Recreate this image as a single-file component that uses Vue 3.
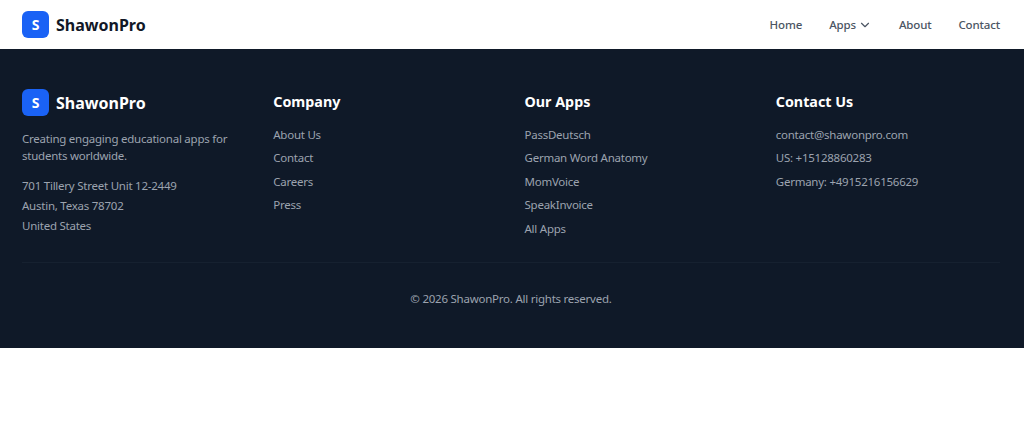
<script setup>
const company = ["About Us", "Contact", "Careers", "Press"];
const apps = ["PassDeutsch", "German Word Anatomy", "MomVoice", "SpeakInvoice", "All Apps"];
const contact = ["contact@shawonpro.com", "US: +15128860283", "Germany: +4915216156629"];
</script>

<template>
  <div class="page">
    <header class="nav">
      <a class="brand">
        <span class="mark">S</span>
        <span class="brand-name">ShawonPro</span>
      </a>
      <nav class="nav-links">
        <a>Home</a>
        <a class="has-caret">
          Apps
          <svg width="14" height="14" viewBox="0 0 24 24" fill="none" stroke="currentColor" stroke-width="2" stroke-linecap="round" stroke-linejoin="round">
            <path d="M6 9l6 6 6-6" />
          </svg>
        </a>
        <a>About</a>
        <a>Contact</a>
      </nav>
    </header>

    <footer class="footer">
      <div class="columns">
        <div class="about">
          <a class="brand">
            <span class="mark">S</span>
            <span class="brand-name">ShawonPro</span>
          </a>
          <p class="tagline">Creating engaging educational apps for students worldwide.</p>
          <address>
            <span>701 Tillery Street Unit 12-2449</span>
            <span>Austin, Texas 78702</span>
            <span>United States</span>
          </address>
        </div>
        <div class="col">
          <h3>Company</h3>
          <ul>
            <li v-for="item in company" :key="item">{{ item }}</li>
          </ul>
        </div>
        <div class="col">
          <h3>Our Apps</h3>
          <ul>
            <li v-for="item in apps" :key="item">{{ item }}</li>
          </ul>
        </div>
        <div class="col">
          <h3>Contact Us</h3>
          <ul>
            <li v-for="item in contact" :key="item">{{ item }}</li>
          </ul>
        </div>
      </div>
      <div class="copyright">© 2026 ShawonPro. All rights reserved.</div>
    </footer>
  </div>
</template>

<style scoped>
.page {
  font-family: "Noto Sans", "Open Sans", sans-serif;
}

.nav {
  display: flex;
  align-items: center;
  justify-content: space-between;
  height: 49px;
  padding: 0 24px 0 22px;
  background: #fff;
}

.brand {
  display: flex;
  align-items: center;
  gap: 7px;
}

.mark {
  display: flex;
  align-items: center;
  justify-content: center;
  width: 27px;
  height: 27px;
  border-radius: 6px;
  background: #1a62f5;
  color: #fff;
  font-size: 14px;
  font-weight: 700;
}

.brand-name {
  color: #111827;
  font-size: 16px;
  font-weight: 700;
}

.nav-links {
  display: flex;
  align-items: center;
  gap: 27px;
  color: #4b5563;
  font-size: 11.5px;
  font-weight: 500;
  letter-spacing: -0.15px;
}

.has-caret {
  display: flex;
  align-items: center;
  gap: 2px;
}

.footer {
  height: 299px;
  box-sizing: border-box;
  padding: 40px 24px 0 22px;
  background: #0f1928;
}

.footer .brand-name {
  color: #fff;
}

.columns {
  display: grid;
  grid-template-columns: repeat(4, minmax(0, 1fr));
  gap: 27px;
  height: 173px;
  border-bottom: 1px solid #162130;
}

.tagline {
  margin: 14px 0 0;
  color: #9ca3af;
  font-size: 11.5px;
  letter-spacing: -0.24px;
  line-height: 17px;
}

address {
  display: flex;
  flex-direction: column;
  margin-top: 12px;
  color: #9ca3af;
  font-size: 11.5px;
  font-style: normal;
  letter-spacing: -0.24px;
  line-height: 20px;
}

h3 {
  margin: 0;
  color: #fff;
  font-size: 14.3px;
  font-weight: 700;
  line-height: 26px;
}

ul {
  margin: 8px 0 0;
  padding: 0;
  list-style: none;
  color: #9ca3af;
  font-size: 11.5px;
  letter-spacing: -0.24px;
}

li {
  height: 23.4px;
  line-height: 23.4px;
}

.copyright {
  margin-top: 27px;
  color: #9ca3af;
  font-size: 11.5px;
  letter-spacing: -0.24px;
  line-height: 18px;
  text-align: center;
}
</style>

<style>
body {
  background: #fff;
}
</style>
